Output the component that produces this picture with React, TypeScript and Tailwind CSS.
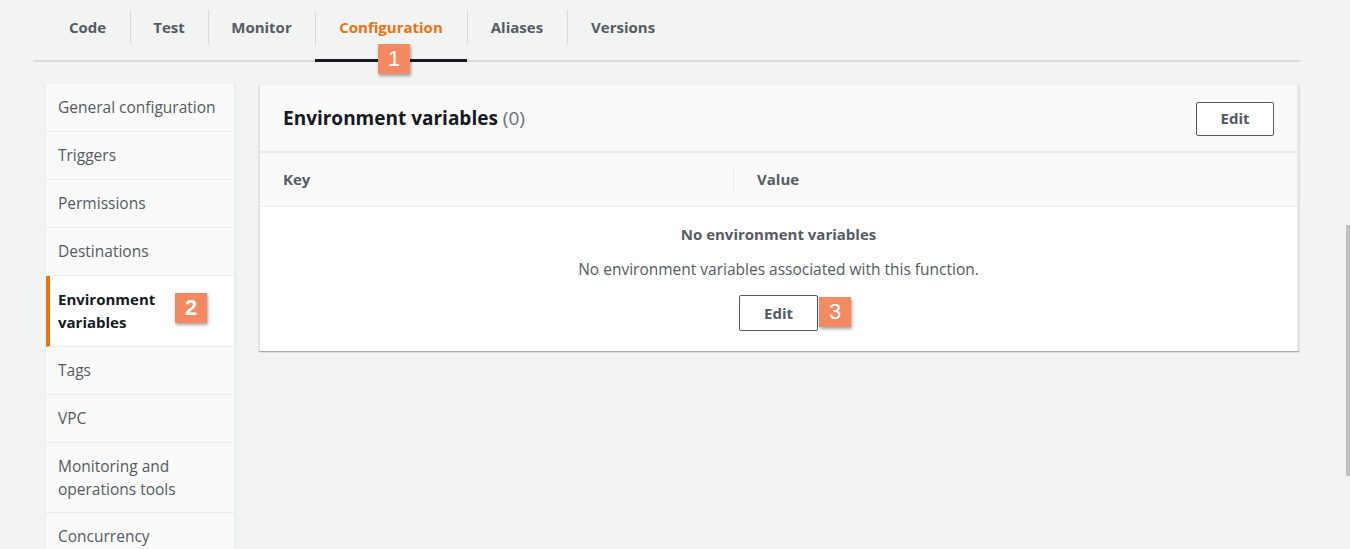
const tabs = [
  { label: "Code", pad: "px-[24px]" },
  { label: "Test", pad: "px-[23px]" },
  { label: "Monitor", pad: "px-[23.5px]" },
  { label: "Configuration", pad: "px-[24px]" },
  { label: "Aliases", pad: "px-[24px]" },
  { label: "Versions", pad: "px-[24px]" },
]

const navItems = [
  "General configuration",
  "Triggers",
  "Permissions",
  "Destinations",
  "Environment variables",
  "Tags",
  "VPC",
  "Monitoring and operations tools",
  "Concurrency",
]

function Badge({ n }: { n: string }) {
  return (
    <span className="absolute flex items-center justify-center w-[32px] h-[30px] bg-[#f58a62] text-white text-[22px] leading-none shadow-[1px_2px_3px_rgba(0,0,0,0.35)] font-['Liberation_Sans',sans-serif]">
      {n}
    </span>
  )
}

export default function App() {
  return (
    <div className="relative w-[1350px] h-[549px] overflow-hidden bg-[#f2f3f3] font-['Open_Sans',sans-serif] text-[#545b64]">
      {/* Tabs */}
      <div className="ml-[33px] mr-[50px] border-b-2 border-[#d5dbdb]">
        <div className="flex items-end pl-[12px] h-[60px]">
          {tabs.map((t, i) => {
            const active = t.label === "Configuration"
            return (
              <div
                key={t.label}
                className={`relative flex items-center h-[60px] ${active ? "border-b-[3px] border-[#16191f] -mb-[2px]" : ""}`}
              >
                {i > 0 && <span className="absolute left-0 top-[10px] h-[34px] w-px bg-[#d5dbdb]" />}
                <span
                  className={`${t.pad} pb-[8px] pt-[2px] text-[15px] font-bold ${active ? "text-[#ec7211]" : "text-[#545b64]"}`}
                >
                  {t.label}
                </span>
                {active && (
                  <span className="absolute left-[63px] top-[42px]">
                    <span className="relative block">
                      <Badge n="1" />
                    </span>
                  </span>
                )}
              </div>
            )
          })}
        </div>
      </div>

      <div className="flex items-start gap-[23px] pl-[45px] pr-[51px] pt-[23px]">
        {/* Side nav */}
        <div className="w-[191px] shrink-0 -mt-px bg-[#fafafa] border-r-2 border-[#e4e7e7] border-l border-[#eaeded]">
          {navItems.map((item) => {
            const active = item === "Environment variables"
            const twoLine = item.length > 22
            return (
              <div
                key={item}
                className={`relative border-b border-[#eaeded] text-[15.5px] leading-[23px] ${twoLine ? "pt-[12px] pb-[11px]" : "py-[12px]"} ${
                  active
                    ? "bg-white border-l-4 border-l-[#ec7211] pl-[8px] pr-[60px] font-bold text-[15px] text-[#16191f]"
                    : "px-[12px]"
                }`}
              >
                {item}
                {active && (
                  <span className="absolute left-[125px] top-[17px]">
                    <Badge n="2" />
                  </span>
                )}
              </div>
            )
          })}
        </div>

        {/* Main panel */}
        <div className="flex-1 bg-white border-l border-r-2 border-[#e4e7e7] shadow-[0_1px_1px_rgba(0,0,0,0.25),0_1px_2px_rgba(0,0,0,0.1)]">
          <div className="flex items-center justify-between h-[68px] px-[23px] pt-[1px] bg-[#fafafa] border-b-2 border-[#eaeded]">
            <h2 className="text-[19px] font-bold text-[#16191f]">
              Environment variables <span className="font-normal text-[#687078]">(0)</span>
            </h2>
            <button className="w-[78px] h-[34px] border border-[#545b64] rounded-[2px] bg-white text-[15px] font-bold text-[#545b64]">
              Edit
            </button>
          </div>
          <div className="flex items-center h-[54px] bg-[#fafafa] border-b border-[#eaeded] text-[15px] font-bold text-[#545b64]">
            <div className="w-[473px] pl-[23px]">Key</div>
            <div className="h-[26px] w-px bg-[#eaeded]" />
            <div className="pl-[23px]">Value</div>
          </div>
          <div className="flex flex-col items-center pt-[16px] pb-[20px]">
            <p className="text-[15px] font-bold text-[#545b64]">No environment variables</p>
            <p className="mt-[12px] text-[15.5px] text-[#545b64]">
              No environment variables associated with this function.
            </p>
            <div className="relative mt-[14px]">
              <button className="w-[79px] h-[36px] border border-[#545b64] rounded-[2px] bg-white text-[15px] font-bold text-[#545b64]">
                Edit
              </button>
              <span className="absolute left-[80px] top-[2px]">
                <Badge n="3" />
              </span>
            </div>
          </div>
        </div>
      </div>

      {/* scrollbar remnant */}
      <div className="absolute right-0 top-[225px] w-[4px] h-[251px] bg-[#c1c1c1]" />
    </div>
  )
}
